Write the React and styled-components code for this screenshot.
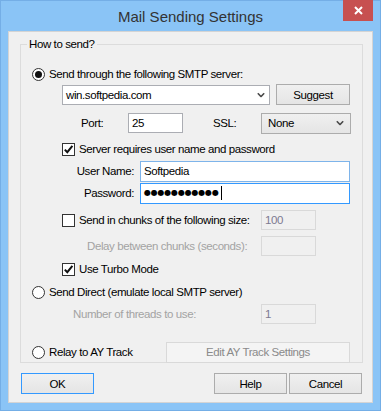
import React from 'react';
import styled, { createGlobalStyle } from 'styled-components';

const GlobalStyle = createGlobalStyle`
  body {
    margin: 0;
    font-family: "Liberation Sans", Arial, sans-serif;
    font-size: 11.5px;
    letter-spacing: -0.4px;
    color: #000;
  }
`;

const Chevron = () => (
  <svg width="8" height="5" viewBox="0 0 8 5">
    <path d="M0.8 0.8 L4 4 L7.2 0.8" fill="none" stroke="#4a4a4a" strokeWidth="1.6" />
  </svg>
);

const Radio = ({ checked, children }) => (
  <>
    <RadioCircle $checked={checked} />
    <Text $gap={4}>{children}</Text>
  </>
);

const Check = ({ checked, children }) => (
  <>
    <CheckBox>
      {checked && (
        <svg width="11" height="11" viewBox="0 0 11 11">
          <path d="M1.8 5.6 L4.3 8.2 L9.4 1.8" fill="none" stroke="#111" strokeWidth="2" />
        </svg>
      )}
    </CheckBox>
    <Text $gap={4}>{children}</Text>
  </>
);

const passwordLength = 11;

const App = () => {
  return (
    <>
      <GlobalStyle />
      <Window>
        <TitleBar>
          <Title>Mail Sending Settings</Title>
          <CloseButton>
            <svg width="9" height="9" viewBox="0 0 9 9">
              <path d="M1 1 L8 8 M8 1 L1 8" stroke="#fff" strokeWidth="2" />
            </svg>
          </CloseButton>
        </TitleBar>
        <Client>
          <GroupBox>
            <Legend>How to send?</Legend>

            <Row $h={18} $mt={10} $pl={11}>
              <Radio checked>Send through the following SMTP server:</Radio>
            </Row>

            <Row $h={21} $mt={1} $pl={41} $pr={12}>
              <Field $w={208} $h={20}>
                win.softpedia.com
                <Arrow $right={4}><Chevron /></Arrow>
              </Field>
              <Button $w={74} $ml={6}>Suggest</Button>
            </Row>

            <Row $h={20} $mt={8} $pl={60}>
              <Label $w={47}>Port:</Label>
              <Field $w={55} $h={20}>25</Field>
              <Label $w={48} $ml={30}>SSL:</Label>
              <DropDown>
                None
                <Arrow $right={6}><Chevron /></Arrow>
              </DropDown>
            </Row>

            <Row $h={16} $mt={8} $pl={41}>
              <Check checked>Server requires user name and password</Check>
            </Row>

            <Row $h={20} $mt={4} $pl={41}>
              <Label $w={72} $right>User Name:</Label>
              <Field $w={210} $h={21} $ml={6} $border="#7eb4ea">Softpedia</Field>
            </Row>

            <Row $h={20} $mt={2} $pl={41}>
              <Label $w={72} $right>Password:</Label>
              <Field $w={210} $h={21} $ml={6} $border="#3399ff">
                {Array.from({ length: passwordLength }).map((_, i) => (
                  <Dot key={i}>●</Dot>
                ))}
                <Caret />
              </Field>
            </Row>

            <Row $h={20} $mt={7} $pl={41} $pr={46}>
              <Check>Send in chunks of the following size:</Check>
              <Field $w={55} $h={20} $ml="auto" $disabled>100</Field>
            </Row>

            <Row $h={20} $mt={6} $pl={66} $pr={46}>
              <Label $disabled>Delay between chunks (seconds):</Label>
              <Field $w={55} $h={20} $ml="auto" $disabled />
            </Row>

            <Row $h={16} $mt={5} $pl={41}>
              <Check checked>Use Turbo Mode</Check>
            </Row>

            <Row $h={18} $mt={6} $pl={11}>
              <Radio>Send Direct (emulate local SMTP server)</Radio>
            </Row>

            <Row $h={20} $mt={3} $pl={52} $pr={46}>
              <Label $disabled>Number of threads to use:</Label>
              <Field $w={55} $h={20} $ml="auto" $disabled>1</Field>
            </Row>

            <Row $h={22} $mt={17} $pl={11} $pr={12}>
              <Radio>Relay to AY Track</Radio>
              <Button $w={184} $ml="auto" $disabled>Edit AY Track Settings</Button>
            </Row>
          </GroupBox>

          <Footer>
            <Button $w={73} $default>OK</Button>
            <Button $w={73} $ml="auto">Help</Button>
            <Button $w={73} $ml={2}>Cancel</Button>
          </Footer>
        </Client>
      </Window>
    </>
  );
};

export default App;

const Window = styled.div`
  width: 381px;
  height: 411px;
  box-sizing: border-box;
  background: #8ac4f6;
  border: 1px solid #74aee6;
  display: flex;
  flex-direction: column;
`;

const TitleBar = styled.div`
  height: 30px;
  position: relative;
  display: flex;
  align-items: center;
  justify-content: center;
`;

const Title = styled.div`
  font-size: 15px;
  letter-spacing: 0;
  color: #333;
`;

const CloseButton = styled.div`
  position: absolute;
  top: -1px;
  right: 7px;
  width: 30px;
  height: 21px;
  background: #c75050;
  display: flex;
  align-items: center;
  justify-content: center;
`;

const Client = styled.div`
  flex: 1;
  margin: 0 7px 7px;
  background: #f0f0f0;
  border: 1px solid #d4d4d4;
  display: flex;
  flex-direction: column;
`;

const GroupBox = styled.div`
  position: relative;
  box-sizing: border-box;
  width: 343px;
  height: 319px;
  margin: 12px 0 0 11px;
  padding-top: 10px;
  border: 1px solid #dcdcdc;
`;

const Legend = styled.div`
  position: absolute;
  top: -8px;
  left: 6px;
  padding: 0 2px;
  background: #f0f0f0;
  line-height: 14px;
`;

const Row = styled.div`
  display: flex;
  align-items: center;
  height: ${(p) => p.$h}px;
  margin-top: ${(p) => p.$mt || 0}px;
  padding-left: ${(p) => p.$pl || 0}px;
  padding-right: ${(p) => p.$pr || 0}px;
`;

const Text = styled.span`
  margin-left: ${(p) => p.$gap}px;
  white-space: nowrap;
`;

const Label = styled.span`
  width: ${(p) => (p.$w ? `${p.$w}px` : 'auto')};
  margin-left: ${(p) => (p.$ml ? `${p.$ml}px` : 0)};
  text-align: ${(p) => (p.$right ? 'right' : 'left')};
  flex-shrink: 0;
  white-space: nowrap;
  color: ${(p) => (p.$disabled ? '#a3a3a3' : '#000')};
`;

const RadioCircle = styled.span`
  width: 13px;
  height: 13px;
  box-sizing: border-box;
  border-radius: 50%;
  border: 1px solid #333;
  background: #fff;
  display: flex;
  align-items: center;
  justify-content: center;
  flex-shrink: 0;
  &::after {
    content: '';
    display: ${(p) => (p.$checked ? 'block' : 'none')};
    width: 7px;
    height: 7px;
    border-radius: 50%;
    background: #111;
  }
`;

const CheckBox = styled.span`
  width: 13px;
  height: 13px;
  box-sizing: border-box;
  border: 1px solid #333;
  background: #fff;
  display: flex;
  align-items: center;
  justify-content: center;
  flex-shrink: 0;
`;

const Field = styled.div`
  position: relative;
  box-sizing: border-box;
  width: ${(p) => p.$w}px;
  height: ${(p) => p.$h}px;
  margin-left: ${(p) => (p.$ml === 'auto' ? 'auto' : `${p.$ml || 0}px`)};
  padding-left: 3px;
  display: flex;
  align-items: center;
  flex-shrink: 0;
  background: ${(p) => (p.$disabled ? '#f0f0f0' : '#fff')};
  border: 1px solid ${(p) => (p.$disabled ? '#d9d9d9' : p.$border || '#abadb3')};
  color: ${(p) => (p.$disabled ? '#7d7a90' : '#000')};
`;

const Arrow = styled.span`
  position: absolute;
  right: ${(p) => p.$right}px;
  top: 50%;
  transform: translateY(-50%);
  display: flex;
`;

const DropDown = styled.div`
  position: relative;
  box-sizing: border-box;
  width: 90px;
  height: 21px;
  padding-left: 6px;
  display: flex;
  align-items: center;
  flex-shrink: 0;
  border: 1px solid #acacac;
  background: linear-gradient(#f0f0f0, #e5e5e5);
`;

const Dot = styled.span`
  width: 6.8px;
  flex-shrink: 0;
  display: flex;
  justify-content: center;
  overflow: visible;
  font-family: "DejaVu Sans", sans-serif;
  font-size: 8px;
  letter-spacing: 0;
  line-height: 1;
`;

const Caret = styled.span`
  width: 1px;
  height: 14px;
  background: #000;
  margin-left: 2px;
`;

const Button = styled.div`
  box-sizing: border-box;
  width: ${(p) => p.$w}px;
  height: 21px;
  margin-left: ${(p) => (p.$ml === 'auto' ? 'auto' : `${p.$ml || 0}px`)};
  display: flex;
  align-items: center;
  justify-content: center;
  flex-shrink: 0;
  color: ${(p) => (p.$disabled ? '#8a8a8a' : '#000')};
  background: ${(p) => (p.$disabled ? '#f4f4f4' : 'linear-gradient(#f0f0f0, #e5e5e5)')};
  border: 1px solid ${(p) => (p.$disabled ? '#d9d9d9' : p.$default ? '#3399ff' : '#acacac')};
`;

const Footer = styled.div`
  display: flex;
  align-items: center;
  margin-top: 10px;
  padding: 0 10px 0 12px;
`;
